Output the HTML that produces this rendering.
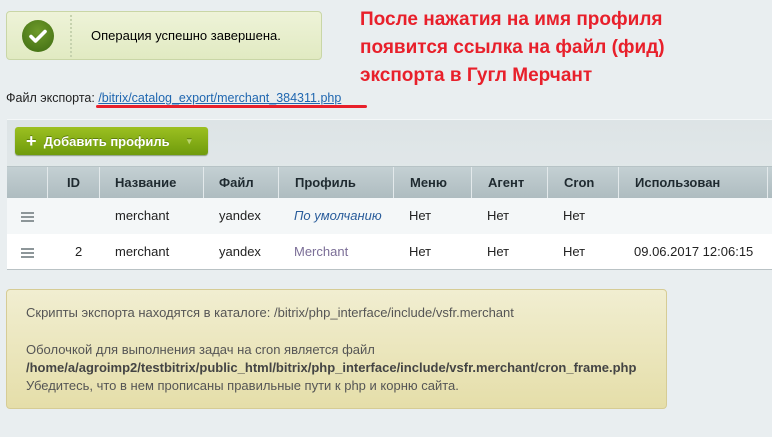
<!DOCTYPE html>
<html><head><meta charset="utf-8"><style>
*{margin:0;padding:0;box-sizing:border-box}
body{width:772px;height:437px;overflow:hidden;background:#e9eef0;font-family:"Liberation Sans","Noto Sans CJK SC",sans-serif;position:relative;font-size:13px;color:#000}
.abs{position:absolute}
.ok{left:6px;top:11px;width:316px;height:49px;border:1px solid #c9d6a6;border-radius:4px;background:linear-gradient(#eef3d8,#e1eac2)}
.circ{left:15px;top:8px;width:32px;height:32px;border-radius:50%;background:radial-gradient(circle at 50% 35%,#6e9a2a,#3e6b12)}
.dots{left:63px;top:3px;height:42px;border-left:2px dotted #c6d2ae}
.red{left:360px;top:6px;color:#e8202b;font-weight:bold;font-size:19px;line-height:28px}
.hdr{left:7px;top:166px;width:765px;height:32px;background:linear-gradient(#c4d0d3,#aebcc0);border-top:1px solid #b7c3c6}
.hdr div,.row div{position:absolute;top:0;height:100%;line-height:31px;font-size:13px}
.hdr div{font-weight:bold;color:#1f2a30;border-left:1px solid #e3e9eb}
.row{left:7px;width:765px;height:36px}
.row div{line-height:36px;color:#222}
.burger{width:13px;height:9px;border-top:2px solid #8d9699;border-bottom:2px solid #8d9699;top:14px!important;height:10px!important}
.burger::after{content:"";position:absolute;left:0;right:0;top:2px;border-top:2px solid #8d9699}
.info{left:6px;top:289px;width:661px;height:120px;border:1px solid #d6cc95;border-radius:4px;background:linear-gradient(#f1eed1,#e5dea9);font-size:13px;color:#555}
</style></head><body>
<div class="abs ok">
 <div class="abs circ"><svg width="32" height="32" viewBox="0 0 32 32"><path d="M9 16.5l4.5 4.5 9.5-9.5" stroke="#fff" stroke-width="3.6" fill="none" stroke-linecap="round" stroke-linejoin="round"/></svg></div>
 <div class="abs dots"></div>
 <div class="abs" style="left:84px;top:16px;font-size:13px">Операция успешно завершена.</div>
</div>
<div class="abs red">После нажатия на имя профиля<br>появится ссылка на файл (фид)<br>экспорта в Гугл Мерчант</div>
<div class="abs" style="left:6px;top:91px;font-size:12.5px;color:#222">Файл экспорта: <span style="color:#2067b0;text-decoration:underline">/bitrix/catalog_export/merchant_384311.php</span></div>
<div class="abs" style="left:96px;top:105px;width:271px;height:3px;background:#e8202b;border-radius:2px"></div>
<div class="abs" style="left:7px;top:119px;width:765px;height:151px;background:linear-gradient(#dde4e6,#e8edee);border-top:1px solid #f4f7f8;border-bottom:1px solid #b9c2c5"></div>
<div class="abs" style="left:15px;top:127px;width:193px;height:28px;border-radius:3px;background:linear-gradient(#9cc021,#6f9b0c);box-shadow:0 1px 1px #8a9a80;color:#fff;font-weight:bold;font-size:13px;line-height:28px;padding-left:11px;text-shadow:0 -1px 0 #5d7e0c"><span style="font-size:18px;vertical-align:-1px">+</span>&nbsp; Добавить профиль<span style="position:absolute;left:172px;color:#b9d36e;font-size:9px">▾</span></div>
<div class="abs hdr">
 <div style="left:0;width:40px;border-left:none"></div>
 <div style="left:40px;width:52px;text-align:center">ID</div>
 <div style="left:92px;width:104px;padding-left:15px">Название</div>
 <div style="left:196px;width:75px;padding-left:15px">Файл</div>
 <div style="left:271px;width:115px;padding-left:16px">Профиль</div>
 <div style="left:386px;width:78px;padding-left:16px">Меню</div>
 <div style="left:464px;width:76px;padding-left:16px">Агент</div>
 <div style="left:540px;width:71px;padding-left:16px">Cron</div>
 <div style="left:611px;width:149px;padding-left:16px">Использован</div>
 <div style="left:760px;width:5px"></div>
</div>
<div class="abs row" style="top:198px;background:#f4f7f8">
 <div class="burger" style="left:14px"></div>
 <div style="left:108px">merchant</div><div style="left:212px">yandex</div>
 <div style="left:287px;color:#2a5d9b;font-style:italic">По умолчанию</div>
 <div style="left:402px">Нет</div><div style="left:480px">Нет</div><div style="left:556px">Нет</div>
</div>
<div class="abs row" style="top:234px;background:#fff;height:35px">
 <div class="burger" style="left:14px"></div>
 <div style="left:68px">2</div>
 <div style="left:108px">merchant</div><div style="left:212px">yandex</div>
 <div style="left:287px;color:#7b6e97">Merchant</div>
 <div style="left:402px">Нет</div><div style="left:480px">Нет</div><div style="left:556px">Нет</div>
 <div style="left:627px">09.06.2017 12:06:15</div>
</div>
<div class="abs info">
 <div class="abs" style="left:19px;top:15px;white-space:nowrap">Скрипты экспорта находятся в каталоге: /bitrix/php_interface/include/vsfr.merchant</div>
 <div class="abs" style="left:19px;top:51px;white-space:nowrap;line-height:18px">Оболочкой для выполнения задач на cron является файл<br><b style="color:#444">/home/a/agroimp2/testbitrix/public_html/bitrix/php_interface/include/vsfr.merchant/cron_frame.php</b><br>Убедитесь, что в нем прописаны правильные пути к php и корню сайта.</div>
</div>
</body></html>
